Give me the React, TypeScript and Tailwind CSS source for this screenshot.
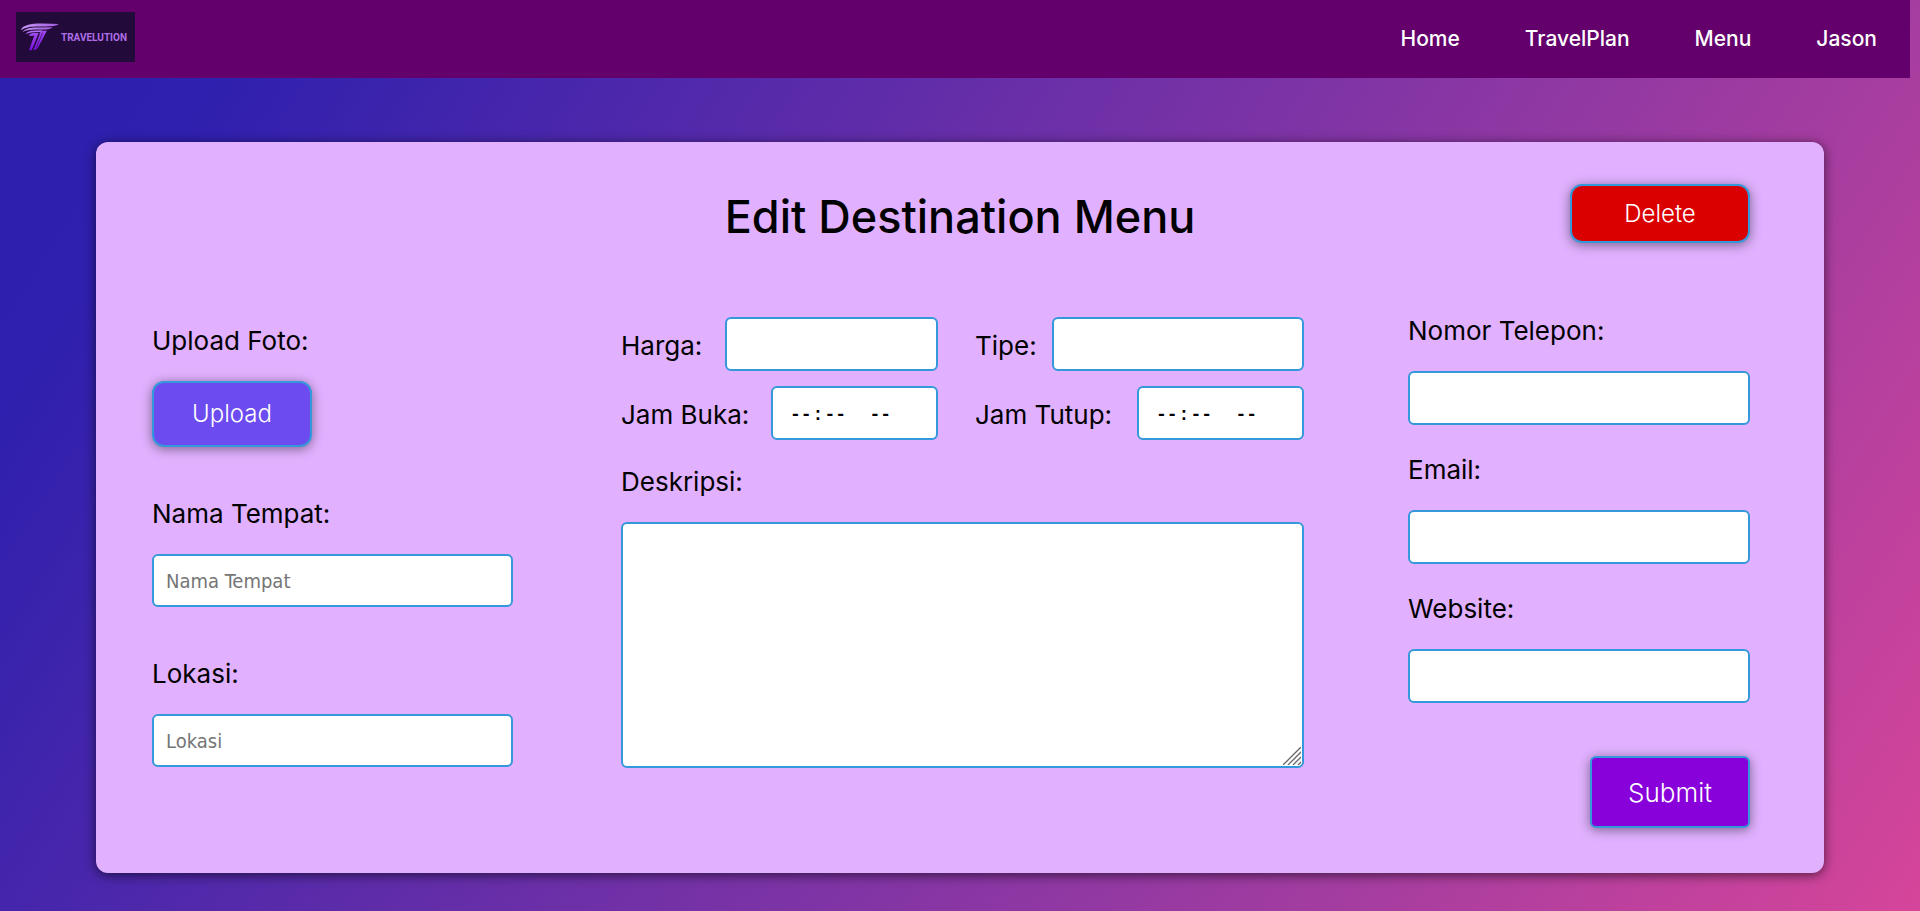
import type { ComponentProps, ReactNode } from "react";

const controlBase = "block rounded-md border-2 border-[#3498db] bg-white text-black outline-none";
const control = `${controlBase} px-3 font-['DejaVu_Sans_Condensed','DejaVu_Sans',sans-serif] text-xl placeholder:text-[#757575]`;
const timeControl = `${controlBase} w-[167px] pl-4 pt-1 font-['Liberation_Mono',monospace] text-lg font-bold [&::-webkit-calendar-picker-indicator]:hidden [&::-webkit-datetime-edit-ampm-field]:ml-4`;
const buttonBase =
  "border-2 border-[#3498db] text-white shadow-[0_2px_12px_rgba(0,0,0,0.45)] cursor-pointer font-light";
const labelText = "text-[26px] leading-9 text-black";

function Logo() {
  return (
    <svg width="119" height="50" viewBox="0 0 119 50" role="img" aria-label="Travelution">
      <defs>
        <linearGradient id="wing" x1="0" y1="0" x2="1" y2="0">
          <stop offset="0" stopColor="#c79af5" />
          <stop offset="1" stopColor="#a35ae0" />
        </linearGradient>
        <linearGradient id="stem" x1="0" y1="0" x2="0" y2="1">
          <stop offset="0" stopColor="#a24cf0" />
          <stop offset="1" stopColor="#7a10e0" />
        </linearGradient>
      </defs>
      <rect width="119" height="50" fill="#220a3a" />
      <path d="M5 18.5 C6 13 15 11.5 27 11.6 L43 12 C40 14.2 36 14.4 30 14.4 L20 14.5 C12 14.7 8 16 5 18.5Z" fill="url(#wing)" />
      <path d="M6.5 20.3 C9 16.4 14 15.4 21 15.4 L37 15.2 C34 17.3 31 17.4 26 17.4 L19 17.5 C13 17.7 9 18.4 6.5 20.3Z" fill="url(#wing)" />
      <path d="M9.5 22.2 C11.5 19 15 18.4 20 18.4 L27 18.3 L24.5 20 L18 20.2 C14 20.4 11.5 21 9.5 22.2Z" fill="#b070f4" />
      <path d="M12.5 23.3 C14 21.6 16 21 18.5 21 L22.6 21 L16 37.4 C15.2 38.2 14 38.4 13 38.2 L18.3 23.6 C16.2 24.2 14 24 12.5 23.3Z" fill="url(#stem)" />
      <path d="M23.6 21 L25.5 19 L31 18.4 L22.6 34.6 C21.4 36.8 20 38 17.4 38.2 L23.6 22.6Z" fill="url(#stem)" />
      <path d="M26.6 20.6 L20.4 35.6" stroke="#220a3a" strokeWidth="0.6" fill="none" />
      <text x="45" y="29" fill="#b06fe8" fontSize="10" fontWeight="700" className="font-[Roboto,sans-serif]">
        TRAVELUTION
      </text>
    </svg>
  );
}

function Field({ id, label, children }: { id: string; label: string; children: ReactNode }) {
  return (
    <div className="flex flex-col gap-[22px]">
      <label htmlFor={id} className={labelText}>
        {label}
      </label>
      {children}
    </div>
  );
}

function InlineField({ id, label, className, ...rest }: { label: string } & ComponentProps<"input">) {
  return (
    <div className="flex items-center justify-between">
      <label htmlFor={id} className={`${labelText} whitespace-nowrap pt-1`}>
        {label}
      </label>
      <input id={id} className={`h-[54px] shrink-0 ${className}`} {...rest} />
    </div>
  );
}

const links = ["Home", "TravelPlan", "Menu", "Jason"];

export default function App() {
  return (
    <div className="min-h-screen bg-[linear-gradient(122deg,#2d20ae_0%,#2f20ae_11%,#6a2fa8_44%,#a53da0_77%,#d6459a_100%)] pb-[38px] font-[Inter,sans-serif]">
      <header className="mr-2.5 flex h-[78px] items-center justify-between bg-[#63006b] pl-4 pr-[33px]">
        <a href="#home" className="-mt-1">
          <Logo />
        </a>
        <nav className="flex gap-[65px] text-[21px] font-medium text-white">
          {links.map((name) => (
            <a key={name} href={`#${name.toLowerCase()}`}>
              {name}
            </a>
          ))}
        </nav>
      </header>

      <main className="mx-[5%] mt-16 rounded-xl bg-[#e1b1ff] pb-[45px] pl-14 pr-[74px] pt-[42px] shadow-[0_2px_12px_rgba(0,0,0,0.6)]">
        <div className="-ml-14 grid grid-cols-[1fr_auto_1fr] items-start pl-[74px]">
          <h1 className="col-start-2 pt-2 text-[45px] font-medium leading-[50px] text-black">Edit Destination Menu</h1>
          <button type="button" className={`${buttonBase} h-[59px] w-[180px] justify-self-end rounded-xl bg-[#db0000] text-2xl`}>
            Delete
          </button>
        </div>

        <form className="mt-[70px] grid grid-cols-[365fr_683fr_342fr] gap-x-[104px]">
          <div className="flex flex-col gap-[49px] pr-1 pt-2.5">
            <Field id="foto" label="Upload Foto:">
              <button id="foto" type="button" className={`${buttonBase} h-[66px] w-40 rounded-xl bg-[#6c4cf0] text-2xl`}>
                Upload
              </button>
            </Field>
            <Field id="nama" label="Nama Tempat:">
              <input id="nama" placeholder="Nama Tempat" className={`${control} h-[53px] w-full`} />
            </Field>
            <Field id="lokasi" label="Lokasi:">
              <input id="lokasi" placeholder="Lokasi" className={`${control} h-[53px] w-full`} />
            </Field>
          </div>

          <div className="pt-1">
            <div className="grid grid-cols-[317fr_329fr] gap-x-[37px] gap-y-[15px]">
              <InlineField id="harga" label="Harga:" className={`${control} w-[213px]`} />
              <InlineField id="tipe" label="Tipe:" className={`${control} w-[252px]`} />
              <InlineField id="buka" label="Jam Buka:" type="time" className={timeControl} />
              <InlineField id="tutup" label="Jam Tutup:" type="time" className={timeControl} />
            </div>
            <div className="mt-6">
              <Field id="deskripsi" label="Deskripsi:">
                <div className="relative">
                  <textarea id="deskripsi" className={`${control} h-[246px] w-full resize-none py-2`} />
                  <svg
                    className="pointer-events-none absolute bottom-[3px] right-[3px]"
                    width="18"
                    height="18"
                    viewBox="0 0 18 18"
                    stroke="#666"
                    strokeWidth="1.3"
                    aria-hidden="true"
                  >
                    <path d="M0 18 L18 0 M5 18 L18 5 M10 18 L18 10 M15 18 L18 15" />
                  </svg>
                </div>
              </Field>
            </div>
          </div>

          <div className="flex flex-col gap-[27px]">
            <Field id="telepon" label="Nomor Telepon:">
              <input id="telepon" type="tel" className={`${control} h-[54px] w-full`} />
            </Field>
            <Field id="email" label="Email:">
              <input id="email" type="email" className={`${control} h-[54px] w-full`} />
            </Field>
            <Field id="website" label="Website:">
              <input id="website" type="url" className={`${control} h-[54px] w-full`} />
            </Field>
            <button type="submit" className={`${buttonBase} mt-[26px] h-[72px] w-40 self-end rounded-md bg-[#8800da] text-[26px]`}>
              Submit
            </button>
          </div>
        </form>
      </main>
    </div>
  );
}
